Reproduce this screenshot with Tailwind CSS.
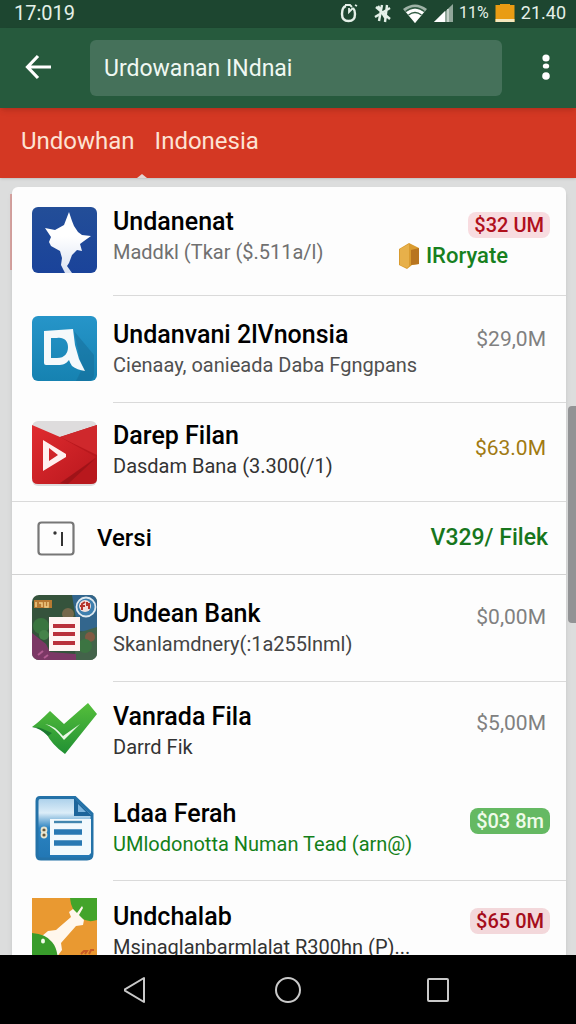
<!DOCTYPE html>
<html lang="id">
<head>
  <meta charset="UTF-8" />
  <meta name="viewport" content="width=device-width, initial-scale=1.0" />
  <title>Undowhan Indonesia</title>
  <script src="https://cdn.jsdelivr.net/npm/@tailwindcss/browser@4"></script>
</head>
<body class="flex h-screen flex-col overflow-hidden bg-[#dcdddd] font-[Roboto,sans-serif] text-black">

  <!-- status bar -->
  <div class="flex h-7 shrink-0 items-center justify-between bg-[#1d4630] pl-3.5 pr-2.5 pb-0.5 text-xl leading-6 text-[#e4f0e8]">
    <span>17:019</span>
    <div class="flex items-center gap-1.5">
      <svg class="h-5 w-5" viewBox="0 0 20 20" fill="none" stroke="currentColor" stroke-width="2.400">
        <path d="M7 3Q3 4 3 11Q3 18 9.500 18Q16 18 16 11Q16 7 14 5" />
        <path d="M6 2h5l2 2M10 5v4l4-4M16 2l2 1" stroke-width="1.800" />
      </svg>
      <svg class="ml-2 h-5 w-5" viewBox="0 0 20 20" fill="none" stroke="currentColor" stroke-width="2.400">
        <path d="M3 4l14 12M2 14L17 5M9 2L6 18M14 2l-2 17M5 3l8 13" />
      </svg>
      <svg class="ml-1 h-5 w-6" viewBox="0 0 24 20">
        <path d="M0 6Q12-3 24 6L12 20z" fill="#9fb3a7" />
        <path d="M3 9Q12 2 21 9L12 20z" fill="#fff" />
        <path d="M2.500 8.500Q12 1 21.500 8.500M5.500 12Q12 7 18.500 12" fill="none" stroke="#315b43" stroke-width="1.300" />
      </svg>
      <svg class="h-5 w-5" viewBox="0 0 20 20">
        <path d="M20 1v18H1z" fill="#91a79a" />
        <path d="M12 8v11H1z" fill="#fff" />
        <path d="M15 6v13" stroke="#c5d2ca" stroke-width="2" />
      </svg>
      <span class="text-base">11%</span>
      <svg class="h-5 w-5" viewBox="0 0 20 20">
        <path d="M5 1h10v1h4.500v17H.5V2H5z" fill="#e99c13" />
        <path d="M.5 16h19v3H.5z" fill="#f5e7bd" />
      </svg>
      <span class="text-lg">21.40</span>
    </div>
  </div>

  <!-- toolbar -->
  <header class="z-10 flex h-20 shrink-0 items-center bg-[#265a3d] pl-6 pr-3.5 shadow-md">
    <button aria-label="Kembali" class="text-white">
      <svg class="h-7 w-7" viewBox="0 0 28 28" fill="none" stroke="currentColor" stroke-width="3.200">
        <path d="M27 13H4M14 2L3.500 13L14 24" />
      </svg>
    </button>
    <input type="text" aria-label="Cari" value="Urdowanan INdnai" class="ml-[38px] h-14 min-w-0 flex-1 rounded-md bg-[#45715a] px-3.5 text-[23px] text-[#f0f8f2] outline-none" />
    <button aria-label="Menu" class="ml-7 flex w-8 justify-center text-white">
      <svg class="h-7 w-2" viewBox="0 0 8 28" fill="currentColor">
        <circle cx="4" cy="4" r="3.600" />
        <ellipse cx="4" cy="12" rx="3.200" ry="2.600" />
        <circle cx="4" cy="22" r="3.800" />
      </svg>
    </button>
  </header>

  <!-- tabs -->
  <nav class="relative flex h-[70px] shrink-0 items-center gap-5 bg-[#d43823] px-[21px] pb-1 text-2xl text-[#fde3d4] shadow">
    <a href="#undowhan">Undowhan</a>
    <a href="#indonesia">Indonesia</a>
    <svg class="absolute bottom-0 left-[137px] h-1 w-2.5" viewBox="0 0 10 4"><path d="M0 4L5 0l5 4z" fill="#e3d5d2" /></svg>
  </nav>

  <!-- list -->
  <main class="relative min-h-0 flex-1 overflow-hidden pl-3 pr-2.5 pt-[9px]">
    <div class="absolute left-2.5 top-4 h-[76px] w-1 bg-[#d9a5a2]"></div>
    <ul class="relative rounded-t-md bg-[#fdfdfd] shadow-md">

      <li class="flex h-[109px] pl-5">
        <svg class="mt-5 h-[66px] w-[65px] shrink-0" viewBox="0 0 65 66">
          <defs>
            <linearGradient id="navy" x1="0" y1="0" x2="0" y2="1"><stop stop-color="#234e98" /><stop offset="1" stop-color="#1a439a" /></linearGradient>
            <linearGradient id="pale" x1="0" y1="0" x2="0" y2="1"><stop offset=".4" stop-color="#fff" /><stop offset="1" stop-color="#dbe3f3" /></linearGradient>
          </defs>
          <rect width="65" height="66" rx="6" fill="url(#navy)" />
          <path d="M37 5l3 9 2 5 4 6 4 3 9 1-7 5-4 3 2 7-5-1-5 5-3 8-2 3 5 7h-7l-4-8 1-7-2-7-9-5-2-4 2-5-6-9 10 2 9-5z" fill="url(#pale)" />
        </svg>
        <div class="ml-4 flex min-w-0 flex-1 justify-between border-b border-[#dadada] pr-4 pt-5">
          <div class="min-w-0 whitespace-nowrap">
            <h2 class="text-[25px] font-medium leading-[30px]">Undanenat</h2>
            <p class="text-xl leading-[30px] text-[#707070]">Maddkl (Tkar ($.511a/l)</p>
          </div>
          <div class="flex flex-col items-end pt-[5px]">
            <span class="rounded-lg bg-[#f8dce0] px-1.5 text-xl font-medium leading-[26px] text-[#b0101c]">$32 UM</span>
            <span class="mr-[42px] flex items-center gap-1.5 text-[22px] font-medium leading-9 text-[#17801e]">
              <svg class="h-[26px] w-[21px]" viewBox="0 0 21 26">
                <path d="M10 0l10 5v16l-7 1-5 4-8-4V6z" fill="#d99b2f" />
                <path d="M1 6l9-5v22l-2 2-7-3z" fill="#e7b04a" />
                <path d="M12 7l8-2v16l-8 1z" fill="#b87520" />
              </svg>
              IRoryate
            </span>
          </div>
        </div>
      </li>

      <li class="flex h-[107px] pl-5">
        <svg class="mt-5 h-[65px] w-[65px] shrink-0" viewBox="0 0 65 65">
          <defs><linearGradient id="cyan" x1="0" y1="0" x2="0" y2="1"><stop stop-color="#2695c9" /><stop offset="1" stop-color="#1682b1" /></linearGradient></defs>
          <rect width="65" height="65" rx="6" fill="url(#cyan)" />
          <path d="M42 15l20 24v20a6 6 0 0 1-6 6H44l6-12z" fill="#14648f" opacity=".4" />
          <path fill-rule="evenodd" d="M12 15l29-2 2 16 4 14 6 12q-8-1-13-5-2-3-3-6c-3 4-6 5-11 5H14q-2 0-2-2zM19 22v20h6c8 0 11-5 11-11s-4-10-11-9z" fill="#f5f9fb" />
        </svg>
        <div class="ml-4 flex min-w-0 flex-1 justify-between border-b border-[#dadada] pr-4 pt-6">
          <div class="min-w-0 whitespace-nowrap">
            <h2 class="text-[25px] font-medium leading-[30px]">Undanvani 2lVnonsia</h2>
            <p class="text-xl leading-[30px] text-[#505050]">Cienaay, oanieada Daba Fgngpans</p>
          </div>
          <span class="px-1 pt-1.5 text-[21px] leading-[26px] text-[#808080]">$29,0M</span>
        </div>
      </li>

      <li class="flex h-[99px] border-b border-[#dadada] pl-5">
        <svg class="mt-[18px] h-[65px] w-[65px] shrink-0" viewBox="0 0 65 65">
          <defs><linearGradient id="red" x1="0" y1="0" x2="1" y2="1"><stop stop-color="#e02c30" /><stop offset="1" stop-color="#b9171d" /></linearGradient></defs>
          <rect width="65" height="65" rx="6" fill="#dedcdd" />
          <path d="M28 16L65 4v54q0 5-6 5H22z" fill="#b8181d" />
          <path d="M28 16L65 4v30z" fill="#cf282c" />
          <path d="M0 4l28 12 36 20-35 26-4 1H6q-6 0-6-6z" fill="url(#red)" />
          <path d="M28 62L64 37 36 63z" fill="#8e1116" opacity=".6" />
          <path fill-rule="evenodd" d="M11 19l23 14v3L11 50zM17 27v13l9-6z" fill="#fff0ef" />
        </svg>
        <div class="ml-4 flex min-w-0 flex-1 justify-between pr-4 pt-[18px]">
          <div class="min-w-0 whitespace-nowrap">
            <h2 class="text-[25px] font-medium leading-[30px]">Darep Filan</h2>
            <p class="text-xl leading-[30px] text-[#333]">Dasdam Bana (3.300(/1)</p>
          </div>
          <span class="px-1 pt-3.5 text-[21px] leading-[26px] text-[#a17a12]">$63.0M</span>
        </div>
      </li>

      <li class="flex h-[73px] items-center justify-between border-b border-[#d2d2d2] pl-[25px] pr-[18px]">
        <div class="flex items-center gap-[22px]">
          <svg class="h-[35px] w-[38px]" viewBox="0 0 38 35" fill="none">
            <rect x="1.500" y="1.500" width="35" height="32" rx="3" stroke="#777" stroke-width="2.200" />
            <circle cx="18" cy="12" r="1.700" fill="#333" />
            <path d="M25 11v14" stroke="#333" stroke-width="2" />
          </svg>
          <h2 class="text-2xl font-medium">Versi</h2>
        </div>
        <span class="text-[23px] font-medium text-[#17761c]">V329/ Filek</span>
      </li>

      <li class="flex h-[107px] pl-5">
        <svg class="mt-5 h-[65px] w-[65px] shrink-0" viewBox="0 0 65 65">
          <defs><clipPath id="tile"><rect width="65" height="65" rx="7" /></clipPath></defs>
          <g clip-path="url(#tile)">
            <path d="M0 0h65v65H0z" fill="#35533c" />
            <path d="M40 0h25v38L46 36z" fill="#33668d" />
            <path d="M46 38l19-6v33H42z" fill="#43634a" />
            <circle cx="9" cy="31" r="8" fill="#39753f" />
            <circle cx="12" cy="40" r="5" fill="#46834a" />
            <circle cx="36" cy="19" r="6" fill="#75684b" />
            <circle cx="58" cy="42" r="5" fill="#805a43" />
            <path d="M0 38l14 11 4 8 26 2v6H0z" fill="#7b3865" />
            <path d="M6 60l5-4M12 63l4-3" stroke="#b25c91" stroke-width="2" />
            <circle cx="53" cy="51" r="7" fill="#3c7442" />
            <rect x="2" y="5" width="18" height="8" fill="#b77a32" />
            <path d="M4 7v5M7 8h3v4M13 7v5h3V7" stroke="#f1cd85" fill="none" stroke-width="1.500" />
            <circle cx="54" cy="12" r="9.500" fill="#3e7fae" stroke="#e0eaf0" stroke-width="1.800" />
            <circle cx="53" cy="11" r="6" fill="#f0dfdc" />
            <path d="M50 15v-6l3-2M48 11h5M55 7v4M57 8v6" stroke="#b5352c" stroke-width="2" fill="none" />
          </g>
          <rect x="17" y="22" width="31" height="34" fill="#fff4f2" />
          <path d="M21 31h22M21 39h22M21 48h22" stroke="#ba303a" stroke-width="4" />
        </svg>
        <div class="ml-4 flex min-w-0 flex-1 justify-between border-b border-[#dadada] pr-4 pt-6">
          <div class="min-w-0 whitespace-nowrap">
            <h2 class="text-[25px] font-medium leading-[30px]">Undean Bank</h2>
            <p class="text-xl leading-[30px] text-[#444]">Skanlamdnery(:1a255lnml)</p>
          </div>
          <span class="px-1 pt-[5px] text-[21px] leading-[26px] text-[#808080]">$0,00M</span>
        </div>
      </li>

      <li class="flex h-[104px] pl-5">
        <svg class="mt-5 h-[52px] w-[65px] shrink-0" viewBox="0 0 65 52">
          <defs><linearGradient id="leaf" x1="0" y1="0" x2="0" y2="1"><stop stop-color="#55bf3b" /><stop offset="1" stop-color="#219034" /></linearGradient></defs>
          <path d="M0 25Q7 20 18 9l14 13L56 1l9 11L33 52Q20 43 14 31Q8 25 0 25z" fill="url(#leaf)" />
          <path d="M0 25Q8 25 13 28l7 3-4 3Q8 26 0 25z" fill="#1b7930" />
          <path d="M13 22q9 1 18 12l17-12-16 16Q22 25 13 22z" fill="#e9f8e6" />
        </svg>
        <div class="ml-4 flex min-w-0 flex-1 justify-between pr-4 pt-5">
          <div class="min-w-0 whitespace-nowrap">
            <h2 class="text-[25px] font-medium leading-[30px]">Vanrada Fila</h2>
            <p class="text-xl leading-[30px] text-[#333]">Darrd Fik</p>
          </div>
          <span class="px-1 pt-2 text-[21px] leading-[26px] text-[#808080]">$5,00M</span>
        </div>
      </li>

      <li class="flex h-[95px] pl-5">
        <svg class="mt-2.5 h-[65px] w-[65px] shrink-0" viewBox="0 0 65 65">
          <defs><linearGradient id="doc" x1="0" y1="0" x2="0" y2="1"><stop stop-color="#a9cfea" /><stop offset=".25" stop-color="#dcedf8" /><stop offset=".5" stop-color="#2a82c0" /><stop offset="1" stop-color="#2277b4" /></linearGradient></defs>
          <path d="M8 1.500h35L60 18v40q0 5-5 5H9q-4 0-4-4V5q0-3.500 3-3.500z" fill="url(#doc)" stroke="#2472a8" stroke-width="3" />
          <path d="M42 2v18h18z" fill="#1d659b" />
          <path d="M46 8v8h8z" fill="#7db5de" />
          <path d="M18 23h41v34l-2 2H18z" fill="#f2f9fd" />
          <path d="M22 26h28" stroke="#4286af" stroke-width="2.400" />
          <path d="M22 36h28M22 47h28" stroke="#2878b3" stroke-width="5.500" />
          <circle cx="12" cy="34" r="2.500" fill="#66573c" stroke="#e7e4cf" stroke-width="1.800" />
          <circle cx="12" cy="39" r="2.500" fill="#66573c" stroke="#e7e4cf" stroke-width="1.800" />
        </svg>
        <div class="ml-4 flex min-w-0 flex-1 justify-between border-b border-[#dadada] pr-4 pt-[13px]">
          <div class="min-w-0 whitespace-nowrap">
            <h2 class="text-[25px] font-medium leading-[30px]">Ldaa Ferah</h2>
            <p class="text-xl leading-[30px] text-[#138019]">UMlodonotta Numan Tead (arn@)</p>
          </div>
          <div class="pt-[9px]">
            <span class="block rounded-lg bg-[#65b963] px-1.5 text-xl font-medium leading-[26px] text-[#effbe9]">$03 8m</span>
          </div>
        </div>
      </li>

      <li class="flex h-[109px] pl-5">
        <svg class="mt-[17px] h-[65px] w-[65px] shrink-0" viewBox="0 0 65 65">
          <path d="M0 0h65v65H0z" fill="#e99931" />
          <path d="M38 0h27v22q-9 3-16-2Q39 13 38 0z" fill="#43a42a" />
          <path d="M10 38l6-5 8-1L39 19l-2-5 4-3 4 4 5-7 1 2-4 7 5 5-1 5-7 1-15 17 1 7-6 8q-3-12-14-22z" fill="#fff7ed" />
          <path d="M0 35q14 1 20 9 6 7 6 21H0z" fill="#389c2b" />
          <ellipse cx="11" cy="43" rx="2" ry="2.500" fill="#effbe9" />
          <path d="M49 56l3-3h3l-2 3M57 56l2-4h3" fill="none" stroke="#c95b25" stroke-width="2" />
        </svg>
        <div class="ml-4 flex min-w-0 flex-1 justify-between pr-4 pt-[21px]">
          <div class="min-w-0 whitespace-nowrap">
            <h2 class="text-[25px] font-medium leading-[30px]">Undchalab</h2>
            <p class="text-xl leading-[30px] text-[#333]">Msinaglanbarmlalat R300hn (P)...</p>
          </div>
          <div class="pt-1.5">
            <span class="block rounded-lg bg-[#f3d8db] px-1.5 text-xl font-medium leading-[26px] text-[#a50d1b]">$65 0M</span>
          </div>
        </div>
      </li>
    </ul>
    <div class="absolute right-0 top-[228px] h-[217px] w-2 rounded-l bg-[#929395]"></div>
  </main>

  <!-- navigation bar -->
  <footer class="flex h-[69px] shrink-0 items-center justify-center gap-[122px] bg-black text-[#c9c9c9]">
    <button aria-label="Kembali">
      <svg class="h-7 w-7" viewBox="0 0 28 28" fill="none" stroke="currentColor" stroke-width="2" stroke-linejoin="round"><path d="M20 2v24L0 14z" /></svg>
    </button>
    <button aria-label="Beranda">
      <svg class="h-7 w-7" viewBox="0 0 28 28" fill="none" stroke="currentColor" stroke-width="2"><circle cx="14" cy="14" r="12" /></svg>
    </button>
    <button aria-label="Aplikasi terbaru">
      <svg class="h-7 w-7" viewBox="0 0 28 28" fill="none" stroke="currentColor" stroke-width="2"><rect x="4" y="3" width="20" height="22" rx="1" /></svg>
    </button>
  </footer>
</body>
</html>
